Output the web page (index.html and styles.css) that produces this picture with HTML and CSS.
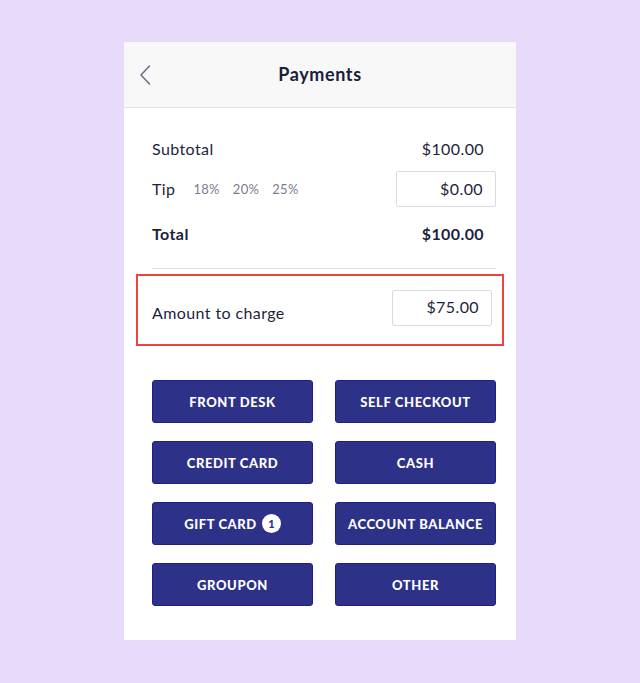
FILE: index.html
```html
<!DOCTYPE html>
<html lang="en">
<head>
<meta charset="utf-8">
<title>Payments</title>
<link rel="stylesheet" href="styles.css">
</head>
<body>
<div class="card">
  <header class="header">
    <button class="back" aria-label="Back">
      <svg width="14" height="22" viewBox="0 0 14 22"><path d="M11.5 2 L3 11 L11.5 20" fill="none" stroke="#6e7088" stroke-width="1.6" stroke-linecap="round" stroke-linejoin="round"/></svg>
    </button>
    <h1 class="title">Payments</h1>
  </header>
  <div class="content">
    <div class="row subtotal">
      <span class="label">Subtotal</span>
      <span class="value">$100.00</span>
    </div>
    <div class="row tip">
      <div class="tip-left">
        <span class="label">Tip</span>
        <span class="pct">18%</span>
        <span class="pct">20%</span>
        <span class="pct">25%</span>
      </div>
      <div class="field tip-field">$0.00</div>
    </div>
    <div class="row total">
      <span class="label">Total</span>
      <span class="value">$100.00</span>
    </div>
    <div class="divider"></div>
    <div class="charge">
      <span class="label charge-label">Amount to charge</span>
      <div class="field charge-field">$75.00</div>
    </div>
    <div class="buttons">
      <button class="btn">FRONT DESK</button>
      <button class="btn">SELF CHECKOUT</button>
      <button class="btn">CREDIT CARD</button>
      <button class="btn">CASH</button>
      <button class="btn">GIFT CARD <span class="badge">1</span></button>
      <button class="btn">ACCOUNT BALANCE</button>
      <button class="btn">GROUPON</button>
      <button class="btn">OTHER</button>
    </div>
  </div>
</div>
</body>
</html>
```
FILE: styles.css
```css
* { box-sizing: border-box; }
html, body { margin: 0; padding: 0; }
body {
  background: #e8dafb;
  font-family: Lato, "Noto Sans", sans-serif;
  color: #1d1f3d;
  height: 683px;
  padding-top: 42px;
}
.card {
  width: 392px;
  height: 598px;
  margin: 0 auto;
  background: #ffffff;
}
.header {
  height: 66px;
  background: #f8f8f8;
  border-bottom: 1px solid #e1e1e4;
  display: flex;
  align-items: center;
  justify-content: center;
  position: relative;
}
.back {
  position: absolute;
  left: 14px;
  top: 22px;
  width: 16px;
  height: 24px;
  padding: 0;
  border: 0;
  background: none;
  display: flex;
}
.title {
  margin: 0 0 2px;
  font-size: 18px;
  font-weight: 700;
  color: #1b1d3a;
  letter-spacing: 0.6px;
}
.content {
  padding: 29px 12px 0;
}
.row {
  display: flex;
  justify-content: space-between;
  align-items: center;
  padding: 0 20px 0 16px;
  font-size: 16px;
  letter-spacing: 0.4px;
}
.row .label, .row .value { padding-bottom: 2px; }
.subtotal { height: 24px; }
.tip { height: 36px; margin-top: 10px; padding-right: 8px; }
.total { height: 24px; margin-top: 15px; font-weight: 700; }
.tip-left { display: flex; align-items: center; }
.pct {
  font-size: 13px;
  letter-spacing: 0.3px;
  color: #7a7c92;
  margin-left: 13px;
}
.tip-left .label { margin-right: 5px; }
.field {
  border: 1px solid #dcdce0;
  border-radius: 2px;
  height: 36px;
  width: 100px;
  display: flex;
  align-items: center;
  justify-content: flex-end;
  padding: 0 12px 2px 0;
  font-size: 16px;
  letter-spacing: 0.4px;
  color: #1d1f3d;
}
.divider {
  height: 1px;
  background: #dedee2;
  margin: 22px 8px 0 16px;
}
.charge {
  margin-top: 5px;
  height: 72px;
  border: 2px solid #ec4540;
  display: flex;
  align-items: center;
  justify-content: space-between;
  padding: 0 10px 0 14px;
}
.charge-label { font-size: 16px; letter-spacing: 0.4px; margin-top: 5px; }
.charge-field { margin-top: -5px; }
.buttons {
  display: grid;
  grid-template-columns: 161px 161px;
  column-gap: 22px;
  row-gap: 18px;
  margin-top: 34px;
  padding-left: 16px;
}
.btn {
  height: 43px;
  background: #2e3188;
  border: 1px solid #1e1f8a;
  border-radius: 3px;
  color: #ffffff;
  font-family: Lato, "Noto Sans", sans-serif;
  font-size: 13px;
  font-weight: 900;
  letter-spacing: 0.6px;
  display: flex;
  align-items: center;
  justify-content: center;
  padding: 0;
}
.badge {
  display: inline-flex;
  align-items: center;
  justify-content: center;
  width: 19px;
  height: 19px;
  border-radius: 50%;
  background: #ffffff;
  color: #2e3188;
  font-size: 11px;
  font-weight: 900;
  margin-left: 5px;
  letter-spacing: 0;
}
```
